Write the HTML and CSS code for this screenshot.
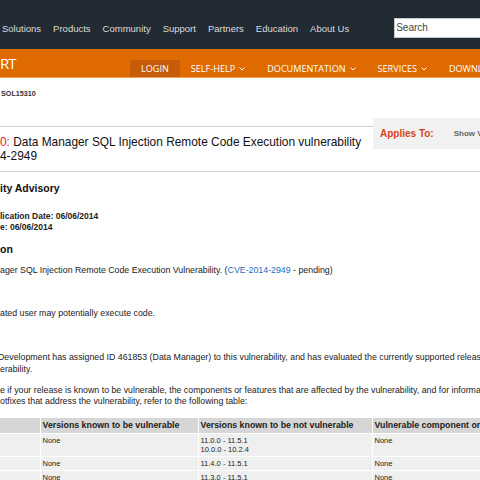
FILE: index.html
```html
<!DOCTYPE html>
<html lang="en">
<head>
<meta charset="utf-8">
<title>SOL15310</title>
<link rel="stylesheet" href="styles.css">
</head>
<body>
<header class="topbar">
  <nav class="mainnav">
    <span>Solutions</span><span>Products</span><span>Community</span><span>Support</span><span>Partners</span><span>Education</span><span>About Us</span>
  </nav>
  <div class="search">Search</div>
</header>
<div class="orangebar">
  <div class="brand">RT</div>
  <nav class="subnav">
    <span class="sub active">LOGIN</span>
    <span class="sub">SELF-HELP<svg class="chev" width="6" height="4" viewBox="0 0 6 4"><polyline points="0.5,0.5 3,3 5.5,0.5" fill="none" stroke="#fff" stroke-width="1"/></svg></span>
    <span class="sub">DOCUMENTATION<svg class="chev" width="6" height="4" viewBox="0 0 6 4"><polyline points="0.5,0.5 3,3 5.5,0.5" fill="none" stroke="#fff" stroke-width="1"/></svg></span>
    <span class="sub">SERVICES<svg class="chev" width="6" height="4" viewBox="0 0 6 4"><polyline points="0.5,0.5 3,3 5.5,0.5" fill="none" stroke="#fff" stroke-width="1"/></svg></span>
    <span class="sub">DOWNLOADS</span>
  </nav>
</div>
<main class="content">
  <div class="crumb">SOL15310</div>
  <div class="titlerow">
    <h1 class="title"><span class="solid">0:</span> Data Manager SQL Injection Remote Code Execution vulnerability<br>4-2949</h1>
    <aside class="applies"><span class="applies-label">Applies To:</span><span class="show">Show Versions</span></aside>
  </div>
  <h2 class="h2 first">ity Advisory</h2>
  <div class="dates">lication Date: 06/06/2014<br>e: 06/06/2014</div>
  <h2 class="h2 second">on</h2>
  <p class="p p1">ager SQL Injection Remote Code Execution Vulnerability. (<a class="link" href="#">CVE-2014-2949</a> - pending)</p>
  <p class="p p2">ated user may potentially execute code.</p>
  <p class="p p3">Development has assigned ID 461853 (Data Manager) to this vulnerability, and has evaluated the currently supported releases<br>erability.</p>
  <p class="p p4">e if your release is known to be vulnerable, the components or features that are affected by the vulnerability, and for information<br>otfixes that address the vulnerability, refer to the following table:</p>
  <table class="vtable">
    <colgroup><col class="c1"><col class="c2"><col class="c3"><col class="c4"></colgroup>
    <thead>
      <tr><th></th><th>Versions known to be vulnerable</th><th>Versions known to be not vulnerable</th><th>Vulnerable component or feature</th></tr>
    </thead>
    <tbody>
      <tr><td></td><td>None</td><td>11.0.0 - 11.5.1<br>10.0.0 - 10.2.4</td><td>None</td></tr>
      <tr><td></td><td>None</td><td>11.4.0 - 11.5.1</td><td>None</td></tr>
      <tr><td></td><td>None</td><td>11.3.0 - 11.5.1</td><td>None</td></tr>
    </tbody>
  </table>
</main>
</body>
</html>
```
FILE: styles.css
```css
html, body {
  margin: 0;
  padding: 0;
}
body {
  width: 480px;
  height: 480px;
  overflow: hidden;
  background: #fff;
  font-family: "Liberation Sans", Arial, sans-serif;
  color: #222;
}

/* top dark bar */
.topbar {
  height: 49px;
  box-sizing: border-box;
  background: #222a33;
  display: flex;
  align-items: flex-start;
  padding-top: 18px;
}
.mainnav {
  display: flex;
  flex-shrink: 0;
  gap: 12px;
  padding-left: 2px;
  padding-top: 1px;
  font-size: 9.5px;
  line-height: 20px;
  color: #dcdcdc;
  white-space: nowrap;
}
.search {
  flex-shrink: 0;
  margin-left: 45px;
  width: 120px;
  height: 20px;
  box-sizing: border-box;
  background: #fff;
  border: 1px solid #c8c8c8;
  padding-left: 1px;
  font-size: 10px;
  line-height: 18px;
  color: #444;
}

/* orange bar */
.orangebar {
  height: 28px;
  background: #de6a00;
  border-bottom: 1px solid #f0a25c;
  display: flex;
}
.brand {
  width: 130px;
  flex-shrink: 0;
  font-family: "Open Sans", sans-serif;
  font-size: 15px;
  line-height: 28px;
  letter-spacing: -1px;
  color: #fff;
  white-space: nowrap;
}
.subnav {
  display: flex;
  align-self: flex-end;
  flex-shrink: 0;
  white-space: nowrap;
}
.sub {
  display: flex;
  align-items: center;
  gap: 4px;
  height: 17px;
  padding: 0 11px;
  font-family: "Open Sans", sans-serif;
  font-size: 9.1px;
  line-height: 17px;
  color: #fff;
}
.sub.active {
  background: #c65c0a;
}
.chev {
  display: block;
}

/* content */
.content {
  white-space: nowrap;
}
.crumb {
  margin-top: 11px;
  padding-left: 1px;
  font-size: 7.2px;
  font-weight: bold;
  line-height: 10px;
  color: #333;
}
.titlerow {
  margin-top: 27px;
  display: flex;
  border-bottom: 1px solid #d2d2d2;
}
.title {
  flex: 1;
  margin: 0;
  border-top: 1px solid #d2d2d2;
  padding: 8px 0;
  font-size: 11.9px;
  font-weight: normal;
  line-height: 14px;
  color: #111;
}
.solid {
  color: #e0201e;
}
.applies {
  flex-shrink: 0;
  width: 107px;
  height: 31px;
  margin-top: -8px;
  box-sizing: border-box;
  padding-left: 7px;
  background: #f1f1f1;
  display: flex;
  align-items: center;
  gap: 20px;
  overflow: hidden;
}
.applies-label {
  font-size: 10px;
  font-weight: bold;
  color: #d8431b;
}
.show {
  font-size: 8px;
  font-weight: bold;
  color: #666;
}
.h2 {
  margin: 0;
  font-size: 10.5px;
  font-weight: bold;
  line-height: 13px;
  color: #111;
}
.h2.first {
  margin-top: 10px;
}
.h2.second {
  margin-top: 10px;
}
.dates {
  margin-top: 16px;
  font-size: 8.5px;
  font-weight: bold;
  line-height: 11px;
  color: #222;
}
.p {
  margin: 0;
  font-size: 8.8px;
  line-height: 11px;
  color: #222;
}
.p1 { margin-top: 9px; }
.p2 { margin-top: 32px; }
.p3 { margin-top: 32px; line-height: 12px; text-indent: -2px; }
.p4 { margin-top: 10px; }
.link {
  color: #1a6fc4;
  text-decoration: none;
}

.vtable {
  margin-top: 11px;
  border-collapse: collapse;
  table-layout: fixed;
  width: 572px;
}
.c1 { width: 40px; }
.c2 { width: 158px; }
.c3 { width: 174px; }
.c4 { width: 200px; }
.vtable th {
  background: #d6d6d6;
  border: 1px solid #fff;
  border-top: 0;
  height: 15px;
  padding: 0 2px;
  font-size: 8.8px;
  font-weight: bold;
  line-height: 15px;
  text-align: left;
  color: #222;
}
.vtable td {
  background: #efefef;
  border: 1px solid #fff;
  padding: 2px 2px;
  font-size: 7.5px;
  line-height: 9px;
  vertical-align: top;
  color: #222;
}
.vtable tr > :first-child {
  border-left: 0;
}
```
